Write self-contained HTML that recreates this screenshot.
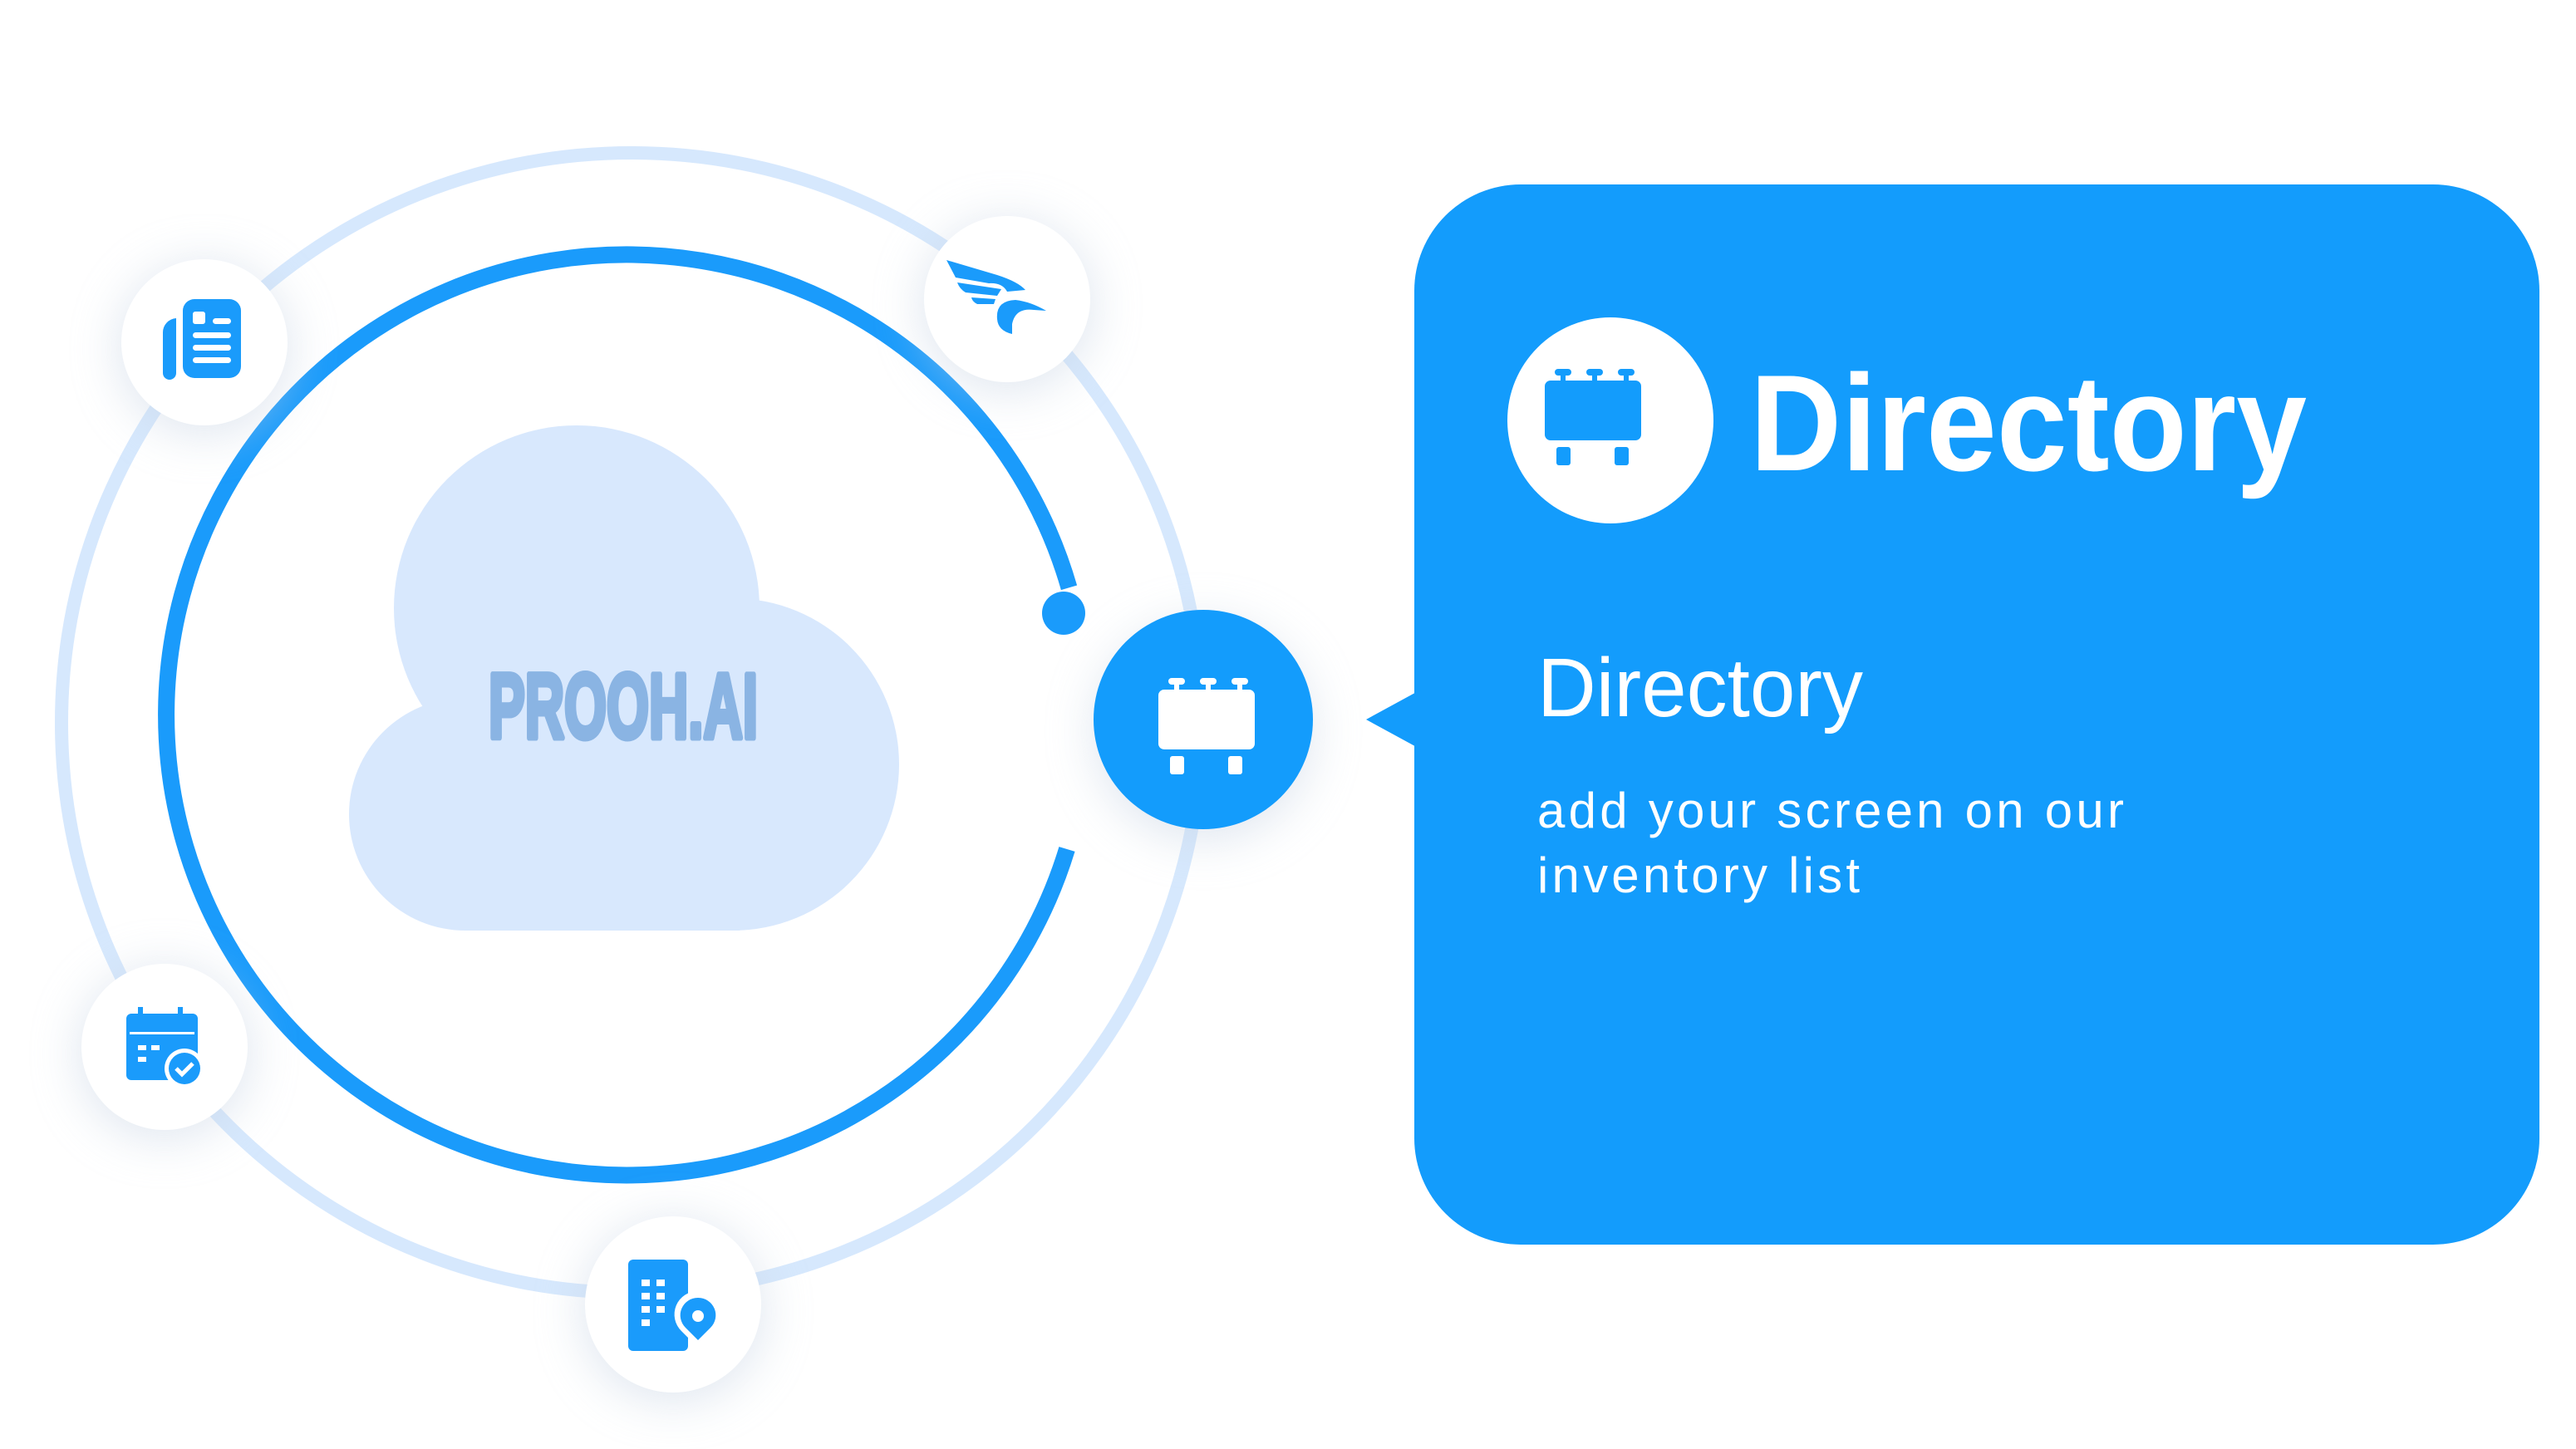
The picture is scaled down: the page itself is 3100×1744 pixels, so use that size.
<!DOCTYPE html>
<html><head><meta charset="utf-8"><style>
html,body{margin:0;padding:0;background:#fff;width:3100px;height:1744px;overflow:hidden}
svg{display:block}
</style></head><body>
<svg width="3100" height="1744" viewBox="0 0 3100 1744" xmlns="http://www.w3.org/2000/svg">
<defs>
<filter id="sh" x="-60%" y="-60%" width="220%" height="220%"><feGaussianBlur stdDeviation="28"/></filter>
<g id="bb">
<rect x="12" y="0" width="20" height="8" rx="4"/><rect x="19" y="4" width="6" height="12"/>
<rect x="50" y="0" width="20" height="8" rx="4"/><rect x="57" y="4" width="6" height="12"/>
<rect x="88" y="0" width="20" height="8" rx="4"/><rect x="95" y="4" width="6" height="12"/>
<rect x="0" y="14" width="116" height="72" rx="7"/>
<rect x="14" y="94" width="17" height="22" rx="3"/><rect x="84" y="94" width="17" height="22" rx="3"/>
</g>
</defs>
<circle cx="760" cy="870" r="686" fill="none" stroke="#d6e8fd" stroke-width="16"/>
<g fill="#d8e8fd">
<circle cx="694" cy="732" r="220"/>
<circle cx="882" cy="920" r="200"/>
<circle cx="560" cy="980" r="140"/>
<rect x="560" y="900" width="330" height="220"/>
</g>
<text x="588" y="888" font-family="'Liberation Sans',sans-serif" font-weight="bold" font-size="110" fill="#8ab4e3" stroke="#8ab4e3" stroke-width="7" stroke-linejoin="round" textLength="324" lengthAdjust="spacingAndGlyphs">PROOH.AI</text>
<path d="M1284,1022 A554,554 0 1 1 1286.5,707.3" fill="none" stroke="#1a9bfb" stroke-width="20"/>
<circle cx="1280" cy="738" r="26" fill="#1a9bfb"/>
<g fill="#c8d4e4" opacity="0.55" filter="url(#sh)">
<circle cx="246" cy="420" r="104"/><circle cx="1212" cy="368" r="104"/>
<circle cx="198" cy="1268" r="104"/><circle cx="810" cy="1578" r="110"/>
<circle cx="1448" cy="880" r="132"/>
</g>
<g fill="#fff">
<circle cx="246" cy="412" r="100"/><circle cx="1212" cy="360" r="100"/>
<circle cx="198" cy="1260" r="100"/><circle cx="810" cy="1570" r="106"/>
</g>
<g fill="#1a9bfb">
<path d="M196,400 a17,17 0 0 1 16,-17 v66 a6,6 0 0 1 -16,0z"/>
<rect x="220" y="360" width="70" height="95" rx="14"/>
</g>
<g fill="#fff">
<rect x="232" y="375" width="15" height="15" rx="3"/><rect x="256" y="383" width="22" height="7" rx="3.5"/>
<rect x="232" y="400" width="46" height="7" rx="3.5"/><rect x="232" y="415" width="46" height="7" rx="3.5"/><rect x="232" y="430" width="46" height="7" rx="3.5"/>
</g>
<!-- eagle -->
<g fill="#1a9bfb">
<path d="M1139,313 L1200,331 Q1225,339 1234,349 L1212,351 Q1206,340 1190,341 L1150,334 Z"/>
<path d="M1152,340 L1205,348 L1200,356 L1162,352 Q1155,348 1152,340Z"/>
<path d="M1169,358 L1198,360 L1196,366 L1176,366 Q1170,363 1169,358Z"/>
<path d="M1200,384 Q1198,362 1222,361 Q1240,363 1259,374 L1244,373 Q1222,370 1218,390 L1218,402 Q1201,398 1200,384Z"/>
</g>
<g fill="#1a9bfb">
<rect x="152" y="1220" width="86" height="80" rx="6"/>
<rect x="166" y="1212" width="6" height="14"/><rect x="214" y="1212" width="6" height="14"/>
</g>
<rect x="156" y="1242" width="78" height="3" fill="#fff"/>
<g fill="#fff"><rect x="166" y="1258" width="10" height="6"/><rect x="182" y="1258" width="10" height="6"/><rect x="166" y="1272" width="10" height="6"/></g>
<circle cx="222" cy="1286" r="24" fill="#fff"/><circle cx="222" cy="1286" r="19" fill="#1a9bfb"/>
<path d="M212,1286 l7,7 l13,-13" stroke="#fff" stroke-width="5" fill="none"/>
<rect x="756" y="1516" width="72" height="110" rx="6" fill="#1a9bfb"/>
<g fill="#fff"><rect x="772" y="1540" width="10" height="8"/><rect x="790" y="1540" width="10" height="8"/><rect x="772" y="1556" width="10" height="8"/><rect x="790" y="1556" width="10" height="8"/><rect x="772" y="1572" width="10" height="8"/><rect x="790" y="1572" width="10" height="8"/><rect x="772" y="1588" width="10" height="8"/></g>
<path d="M840,1554 a28,28 0 0 1 20,48 l-20,20 l-20,-20 a28,28 0 0 1 20,-48z" fill="#fff"/>
<path d="M840,1562 a21,21 0 0 1 15,36 l-15,15 l-15,-15 a21,21 0 0 1 15,-36z" fill="#1a9bfb"/>
<circle cx="840" cy="1584" r="7" fill="#fff"/>
<circle cx="1448" cy="866" r="132" fill="#139cfc"/>
<use href="#bb" x="1394" y="816" fill="#fff"/>
<rect x="1702" y="222" width="1354" height="1276" rx="128" fill="#139cfc"/>
<path d="M1710,830 L1644,866 L1710,902Z" fill="#139cfc"/>
<circle cx="1938" cy="506" r="124" fill="#fff"/>
<use href="#bb" x="1859" y="444" fill="#139cfc"/>
<g fill="#fff" font-family="'Liberation Sans',sans-serif">
<text x="2106" y="566" font-size="165" font-weight="bold" textLength="670" lengthAdjust="spacingAndGlyphs">Directory</text>
<text x="1850" y="862" font-size="100" textLength="392" lengthAdjust="spacingAndGlyphs">Directory</text>
<text x="1850" y="996" font-size="60" textLength="706" lengthAdjust="spacing">add your screen on our</text>
<text x="1850" y="1074" font-size="60" textLength="388" lengthAdjust="spacing">inventory list</text>
</g>
</svg>
</body></html>
